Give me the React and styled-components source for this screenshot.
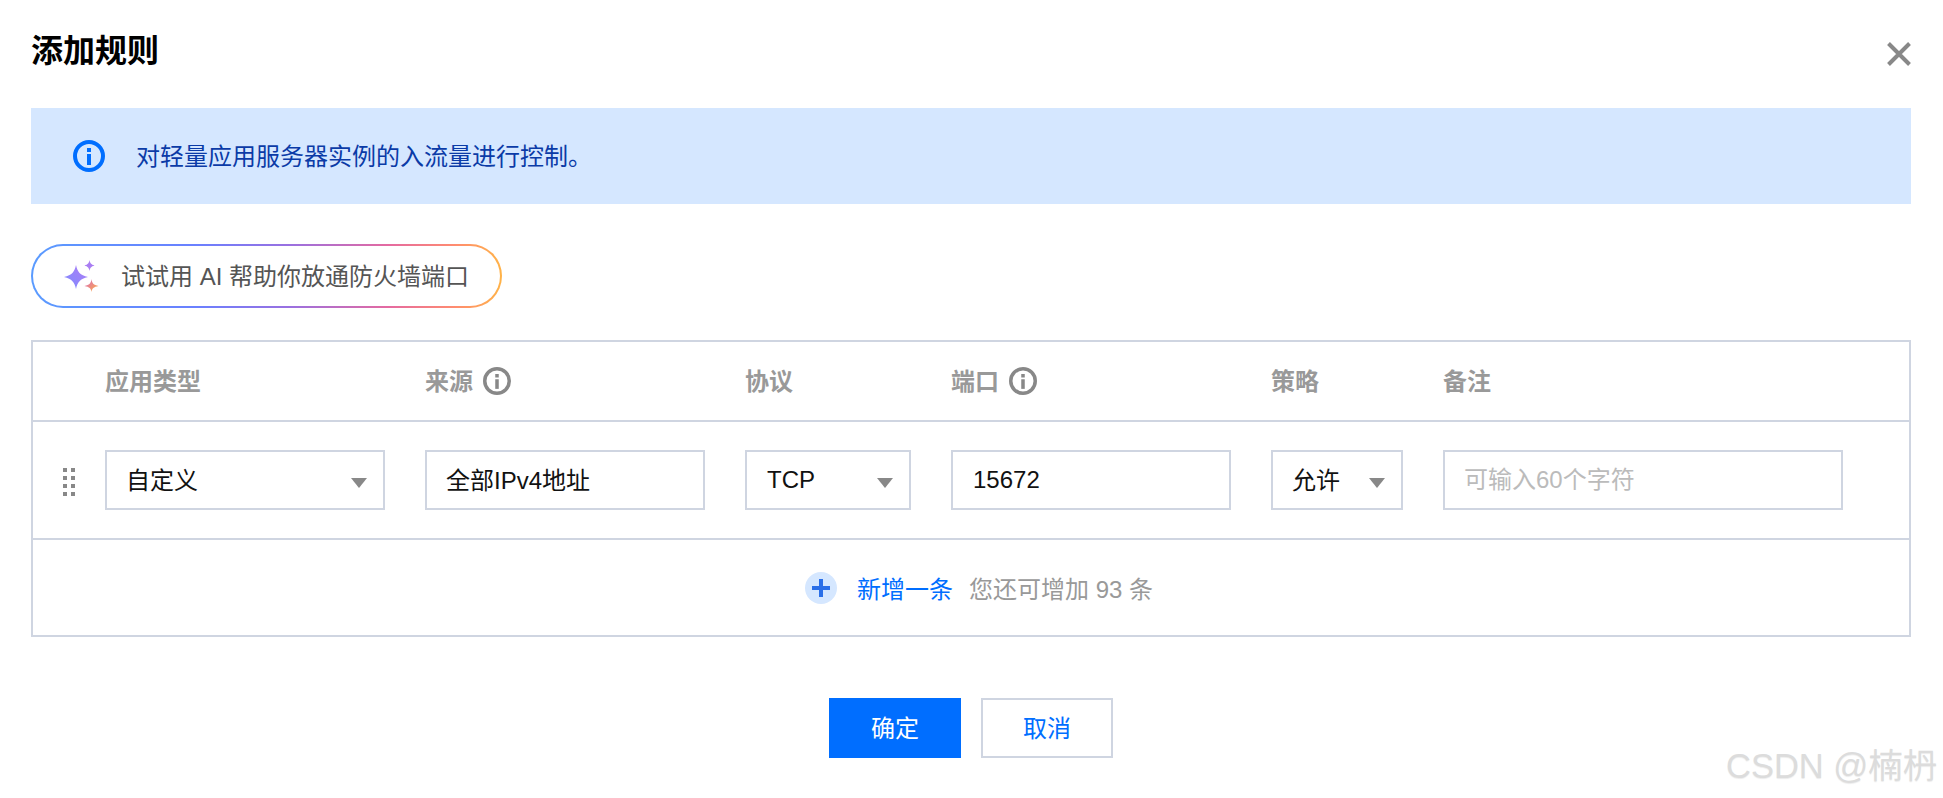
import React from "react";
import styled, { createGlobalStyle } from "styled-components";

const Global = createGlobalStyle`
  html, body { margin: 0; padding: 0; background: #fff; }
  body { font-family: "Liberation Sans", "Noto Sans CJK SC", sans-serif; }
  * { box-sizing: border-box; }
`;

const Page = styled.div`
  position: relative;
  width: 1943px;
  height: 798px;
  padding: 0 32px 0 31px;
  overflow: hidden;
  background: #fff;
`;

const Header = styled.header`
  display: flex;
  justify-content: space-between;
  align-items: flex-start;
  height: 108px;
`;

const Title = styled.h1`
  margin: 31px 0 0;
  font-size: 32px;
  line-height: 40px;
  font-weight: 700;
  color: #000;
`;

const CloseButton = styled.button`
  margin-top: 42px;
  padding: 0;
  width: 24px;
  height: 24px;
  border: 0;
  background: none;
  display: block;
`;

const Alert = styled.div`
  display: flex;
  align-items: center;
  gap: 31px;
  height: 96px;
  padding-left: 42px;
  background: #d5e7ff;
  color: #0b3ba7;
  font-size: 24px;
`;

const AlertText = styled.span`
  padding-bottom: 4px;
`;

const AiPill = styled.div`
  display: flex;
  align-items: center;
  gap: 22px;
  width: 471px;
  height: 64px;
  margin-top: 40px;
  padding-left: 30px;
  border: 2px solid transparent;
  border-radius: 32px;
  background:
    linear-gradient(#fff, #fff) padding-box,
    linear-gradient(90deg, #5a9bff 0%, #6a80ff 35%, #9a70e0 55%, #e56aa0 76%, #ff8c70 90%, #ffb347 100%) border-box;
  color: #555;
  font-size: 24px;
`;

const PillText = styled.span`
  padding-bottom: 3px;
`;

const Table = styled.section`
  margin-top: 32px;
  height: 297px;
  border: 2px solid #cfd5e1;
  background: #fff;
`;

const Row = styled.div`
  display: flex;
  align-items: center;
  gap: 40px;
  padding-left: 72px;
  height: ${(p) => p.$height}px;
  position: relative;
  border-bottom: 2px solid #cfd5e1;
`;

const HeaderCell = styled.div`
  display: flex;
  align-items: center;
  gap: 10px;
  width: ${(p) => p.$w}px;
  font-size: 24px;
  font-weight: 700;
  color: #999;
  span { padding-bottom: 4px; }
`;

const Field = styled.div`
  position: relative;
  display: flex;
  align-items: center;
  width: ${(p) => p.$w}px;
  height: 60px;
  padding: 0 20px ${(p) => (p.$lift ? 4 : 0)}px ${(p) => (p.$cjk ? 19 : 20)}px;
  border: 2px solid #cfd5e1;
  font-size: 24px;
  color: #111;
  background: #fff;
`;

const TextInput = styled.input`
  width: ${(p) => p.$w}px;
  height: 60px;
  padding: 0 20px ${(p) => (p.$lift ? 4 : 0)}px ${(p) => (p.$cjk ? 19 : 20)}px;
  border: 2px solid #cfd5e1;
  border-radius: 0;
  outline: none;
  font: inherit;
  font-size: 24px;
  color: #111;
  background: #fff;
  &::placeholder { color: #bbb; opacity: 1; }
`;

const Caret = styled.span`
  position: absolute;
  right: 16px;
  top: 26px;
  width: 0;
  height: 0;
  border-left: 8.5px solid transparent;
  border-right: 8.5px solid transparent;
  border-top: 10px solid #888;
`;

const DragHandle = styled.div`
  position: absolute;
  left: 30px;
  top: 46px;
  display: grid;
  grid-template-columns: 4px 4px;
  grid-auto-rows: 4px;
  gap: 4px;
  span { background: #888; }
`;

const AddRow = styled.div`
  display: flex;
  align-items: center;
  justify-content: center;
  height: 95px;
  font-size: 24px;
  padding-left: 16px;
`;

const AddCircle = styled.span`
  position: relative;
  width: 32px;
  height: 32px;
  border-radius: 50%;
  background: #d5e7ff;
  margin-right: 20px;
  &::before, &::after {
    content: "";
    position: absolute;
    background: #2a6fe8;
  }
  &::before { left: 7px; right: 7px; top: 14px; height: 4px; }
  &::after { top: 7px; bottom: 7px; left: 14px; width: 4px; }
`;

const AddLink = styled.span`
  color: #006eff;
  margin-right: 16px;
`;

const Hint = styled.span`
  color: #999;
`;

const Footer = styled.footer`
  display: flex;
  justify-content: center;
  gap: 20px;
  margin-top: 61px;
`;

const Button = styled.button`
  width: 132px;
  height: 60px;
  padding: 0 0 4px;
  border: 2px solid ${(p) => (p.$primary ? "#006eff" : "#cfd5e1")};
  border-radius: 0;
  background: ${(p) => (p.$primary ? "#006eff" : "#fff")};
  color: ${(p) => (p.$primary ? "#fff" : "#006eff")};
  font: inherit;
  font-size: 24px;
`;

const Watermark = styled.div`
  position: absolute;
  left: 1726px;
  top: 746px;
  font-size: 34.5px;
  line-height: 40px;
  color: #dcdcdc;
  text-shadow: 0 1px 1px #ececec;
  white-space: nowrap;
`;

const InfoOutline = ({ color, size, sw }) => (
  <svg width={size} height={size} viewBox="0 0 32 32" fill="none">
    <circle cx="16" cy="16" r={16 - sw / 2} stroke={color} strokeWidth={sw} />
    <rect x="14" y="8" width="4" height="4" fill={color} />
    <rect x="14" y="14" width="4" height="11" fill={color} />
  </svg>
);

const Sparkles = () => (
  <svg width="36" height="32" viewBox="0 0 36 32">
    <defs>
      <linearGradient id="sa" x1="0" y1="1" x2="1" y2="0">
        <stop offset="0" stopColor="#7d8cff" />
        <stop offset="1" stopColor="#b07cf5" />
      </linearGradient>
      <linearGradient id="sb" x1="0" y1="0" x2="1" y2="1">
        <stop offset="0" stopColor="#d868c8" />
        <stop offset="1" stopColor="#ffb03a" />
      </linearGradient>
    </defs>
    <path d="M13 5 C14.500 12 17 15 25 17 C17 19 14.500 22 13 29 C11.500 22 9 19 1 17 C9 15 11.500 12 13 5 Z" fill="url(#sa)" />
    <path d="M26.500 0 C27 3 28 4.500 31.500 5.500 C28 6.500 27 8 26.500 11 C26 8 25 6.500 21.500 5.500 C25 4.500 26 3 26.500 0 Z" fill="#a97df2" />
    <path d="M28.500 19 C29 23 30.500 25 35.500 26 C30.500 27 29 28.500 28.500 32 C28 28.500 26.500 27 21.500 26 C26.500 25 28 23 28.500 19 Z" fill="url(#sb)" />
  </svg>
);

const columns = [
  { label: "应用类型", w: 280 },
  { label: "来源", w: 280, info: true },
  { label: "协议", w: 166 },
  { label: "端口", w: 280, info: true },
  { label: "策略", w: 132 },
  { label: "备注", w: 400 },
];

export default function App() {
  return (
    <Page>
      <Global />
      <Header>
        <Title>添加规则</Title>
        <CloseButton aria-label="关闭">
          <svg width="24" height="24" viewBox="0 0 24 24" fill="none">
            <path d="M1.500 1.500 L22.500 22.500 M22.500 1.500 L1.500 22.500" stroke="#888" strokeWidth="4" />
          </svg>
        </CloseButton>
      </Header>

      <Alert>
        <InfoOutline color="#006eff" size={32} sw={4} />
        <AlertText>对轻量应用服务器实例的入流量进行控制。</AlertText>
      </Alert>

      <AiPill>
        <Sparkles />
        <PillText>试试用 AI 帮助你放通防火墙端口</PillText>
      </AiPill>

      <Table>
        <Row $height={80}>
          {columns.map((c) => (
            <HeaderCell key={c.label} $w={c.w}>
              <span>{c.label}</span>
              {c.info && <InfoOutline color="#888" size={28} sw={4} />}
            </HeaderCell>
          ))}
        </Row>
        <Row $height={118}>
          <DragHandle>
            {Array.from({ length: 8 }, (_, i) => (
              <span key={i} />
            ))}
          </DragHandle>
          <Field $w={280} $lift $cjk>
            自定义
            <Caret />
          </Field>
          <TextInput $w={280} $lift $cjk readOnly value="全部IPv4地址" />
          <Field $w={166}>
            TCP
            <Caret />
          </Field>
          <TextInput $w={280} readOnly value="15672" />
          <Field $w={132} $lift $cjk>
            允许
            <Caret />
          </Field>
          <TextInput $w={400} $cjk readOnly value="" placeholder="可输入60个字符" />
        </Row>
        <AddRow>
          <AddCircle />
          <AddLink>新增一条</AddLink>
          <Hint>您还可增加 93 条</Hint>
        </AddRow>
      </Table>

      <Footer>
        <Button $primary>确定</Button>
        <Button>取消</Button>
      </Footer>

      <Watermark>CSDN @楠枬</Watermark>
    </Page>
  );
}
